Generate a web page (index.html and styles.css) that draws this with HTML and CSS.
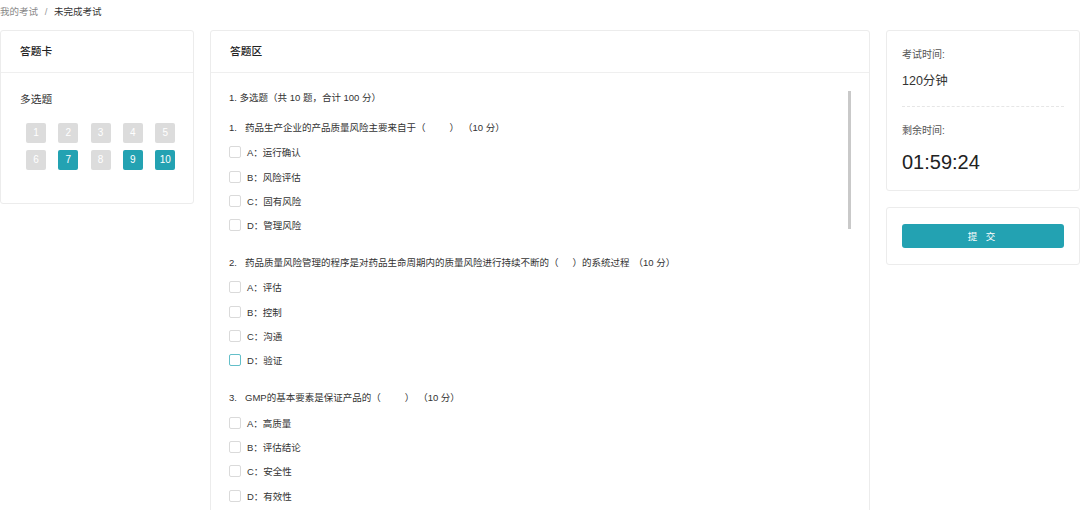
FILE: index.html
```html
<!DOCTYPE html>
<html lang="zh-CN">
<head>
  <meta charset="UTF-8" />
  <title>未完成考试</title>
  <link rel="stylesheet" href="styles.css">
</head>
<body>
  <div class="breadcrumb">
    <span class="crumb-link">我的考试</span>
    <span class="crumb-sep">/</span>
    <span class="crumb-current">未完成考试</span>
  </div>

  <div class="layout">
    <!-- 答题卡 -->
    <div class="card sheet">
      <div class="card-head">答题卡</div>
      <div class="card-body sheet-body">
        <div class="sheet-type">多选题</div>
        <div class="sheet-grid">
          <span class="num">1</span>
          <span class="num">2</span>
          <span class="num">3</span>
          <span class="num">4</span>
          <span class="num">5</span>
          <span class="num">6</span>
          <span class="num done">7</span>
          <span class="num">8</span>
          <span class="num done">9</span>
          <span class="num done">10</span>
        </div>
      </div>
    </div>

    <!-- 答题区 -->
    <div class="card paper">
      <div class="card-head">答题区</div>
      <div class="card-body paper-body">
        <div class="section-title">1. 多选题（共 10 题，合计 100 分）</div>

        <div class="question">
          <div class="q-title"><span class="q-no">1.</span>药品生产企业的产品质量风险主要来自于（<span class="blank"></span>）<span class="score">（10 分）</span></div>
          <label class="option"><span class="box"></span>A：运行确认</label>
          <label class="option"><span class="box"></span>B：风险评估</label>
          <label class="option"><span class="box"></span>C：固有风险</label>
          <label class="option"><span class="box"></span>D：管理风险</label>
        </div>

        <div class="question">
          <div class="q-title"><span class="q-no">2.</span>药品质量风险管理的程序是对药品生命周期内的质量风险进行持续不断的（<span class="blank short"></span>）的系统过程<span class="score">（10 分）</span></div>
          <label class="option"><span class="box"></span>A：评估</label>
          <label class="option"><span class="box"></span>B：控制</label>
          <label class="option"><span class="box"></span>C：沟通</label>
          <label class="option"><span class="box hover"></span>D：验证</label>
        </div>

        <div class="question">
          <div class="q-title"><span class="q-no">3.</span>GMP的基本要素是保证产品的（<span class="blank"></span>）<span class="score">（10 分）</span></div>
          <label class="option"><span class="box"></span>A：高质量</label>
          <label class="option"><span class="box"></span>B：评估结论</label>
          <label class="option"><span class="box"></span>C：安全性</label>
          <label class="option"><span class="box"></span>D：有效性</label>
        </div>

        <div class="scrollbar"></div>
      </div>
    </div>

    <!-- 时间 / 提交 -->
    <div class="side">
      <div class="card timer">
        <div class="timer-label">考试时间:</div>
        <div class="timer-total">120分钟</div>
        <div class="timer-line"></div>
        <div class="timer-label">剩余时间:</div>
        <div class="timer-left">01:59:24</div>
      </div>
      <div class="card submit-card">
        <button class="submit">提 交</button>
      </div>
    </div>
  </div>
</body>
</html>
```
FILE: styles.css
```css
html, body {
  margin: 0;
  height: 100%;
  overflow: hidden;
}
body {
  font-family: "Liberation Sans", "Noto Sans CJK SC", sans-serif;
  font-size: 9.5px;
  color: #333;
  background: #fff;
}
.breadcrumb {
  height: 24px;
  line-height: 24px;
  margin-bottom: 6px;
}
.crumb-link {
  color: #888;
}
.crumb-sep {
  color: #999;
  margin: 0 4px;
}
.crumb-current {
  color: #333;
}
.layout {
  display: grid;
  grid-template-columns: 194px 1fr 194px;
  column-gap: 16px;
  align-items: start;
}
.card {
  background: #fff;
  border: 1px solid #ececec;
  border-radius: 3px;
}
.card-head {
  height: 41px;
  line-height: 41px;
  padding: 0 19px;
  border-bottom: 1px solid #efefef;
  font-size: 10.7px;
  font-weight: 500;
  color: #222;
}
.sheet-body {
  padding: 19px 19px 33px;
}
.sheet-type {
  font-size: 10.7px;
  line-height: 14px;
  color: #333;
}
.sheet-grid {
  display: grid;
  grid-template-columns: repeat(5, 20px);
  column-gap: 12.3px;
  row-gap: 7px;
  margin: 17px 0 0 6px;
}
.num {
  height: 20px;
  line-height: 20px;
  text-align: center;
  background: #dcdcdc;
  color: #fff;
  font-size: 10px;
  border-radius: 2px;
}
.num.done {
  background: #23a2b2;
}
.paper {
  height: 520px;
}
.paper-body {
  position: relative;
  padding: 18px 18px;
}
.section-title {
  line-height: 14px;
}
.question {
  margin-top: 24px;
}
.section-title + .question {
  margin-top: 16px;
}
.q-title {
  display: flex;
  align-items: center;
  line-height: 14px;
  white-space: nowrap;
}
.q-no {
  width: 16px;
}
.blank {
  display: inline-block;
  width: 24px;
}
.blank.short {
  width: 14px;
}
.score {
  margin-left: 4px;
}
.option {
  display: flex;
  align-items: center;
  height: 14px;
  margin-top: 10.3px;
}
.box {
  width: 10px;
  height: 10px;
  border: 1px solid #dadada;
  border-radius: 2px;
  margin-right: 6px;
}
.box.hover {
  border-color: #63bfc9;
}
.scrollbar {
  position: absolute;
  top: 18px;
  right: 18px;
  width: 3px;
  height: 138px;
  background: #c9c9c9;
}
.side {
  display: flex;
  flex-direction: column;
  gap: 16px;
}
.timer {
  padding: 17px 15px 16px;
}
.timer-label {
  line-height: 14px;
  font-size: 10px;
  color: #555;
}
.timer-total {
  margin-top: 11px;
  line-height: 16px;
  font-size: 12.5px;
  color: #333;
}
.timer-line {
  margin: 17px 0;
  border-top: 1px dashed #e6e6e6;
}
.timer-left {
  margin-top: 12px;
  line-height: 24px;
  font-size: 20px;
  color: #222;
}
.submit-card {
  padding: 16px 15px;
}
.submit {
  display: block;
  width: 100%;
  height: 24px;
  background: #23a2b2;
  color: #fff;
  border: none;
  border-radius: 3px;
  font-family: inherit;
  font-size: 9.5px;
  letter-spacing: 3px;
  cursor: pointer;
}
```
